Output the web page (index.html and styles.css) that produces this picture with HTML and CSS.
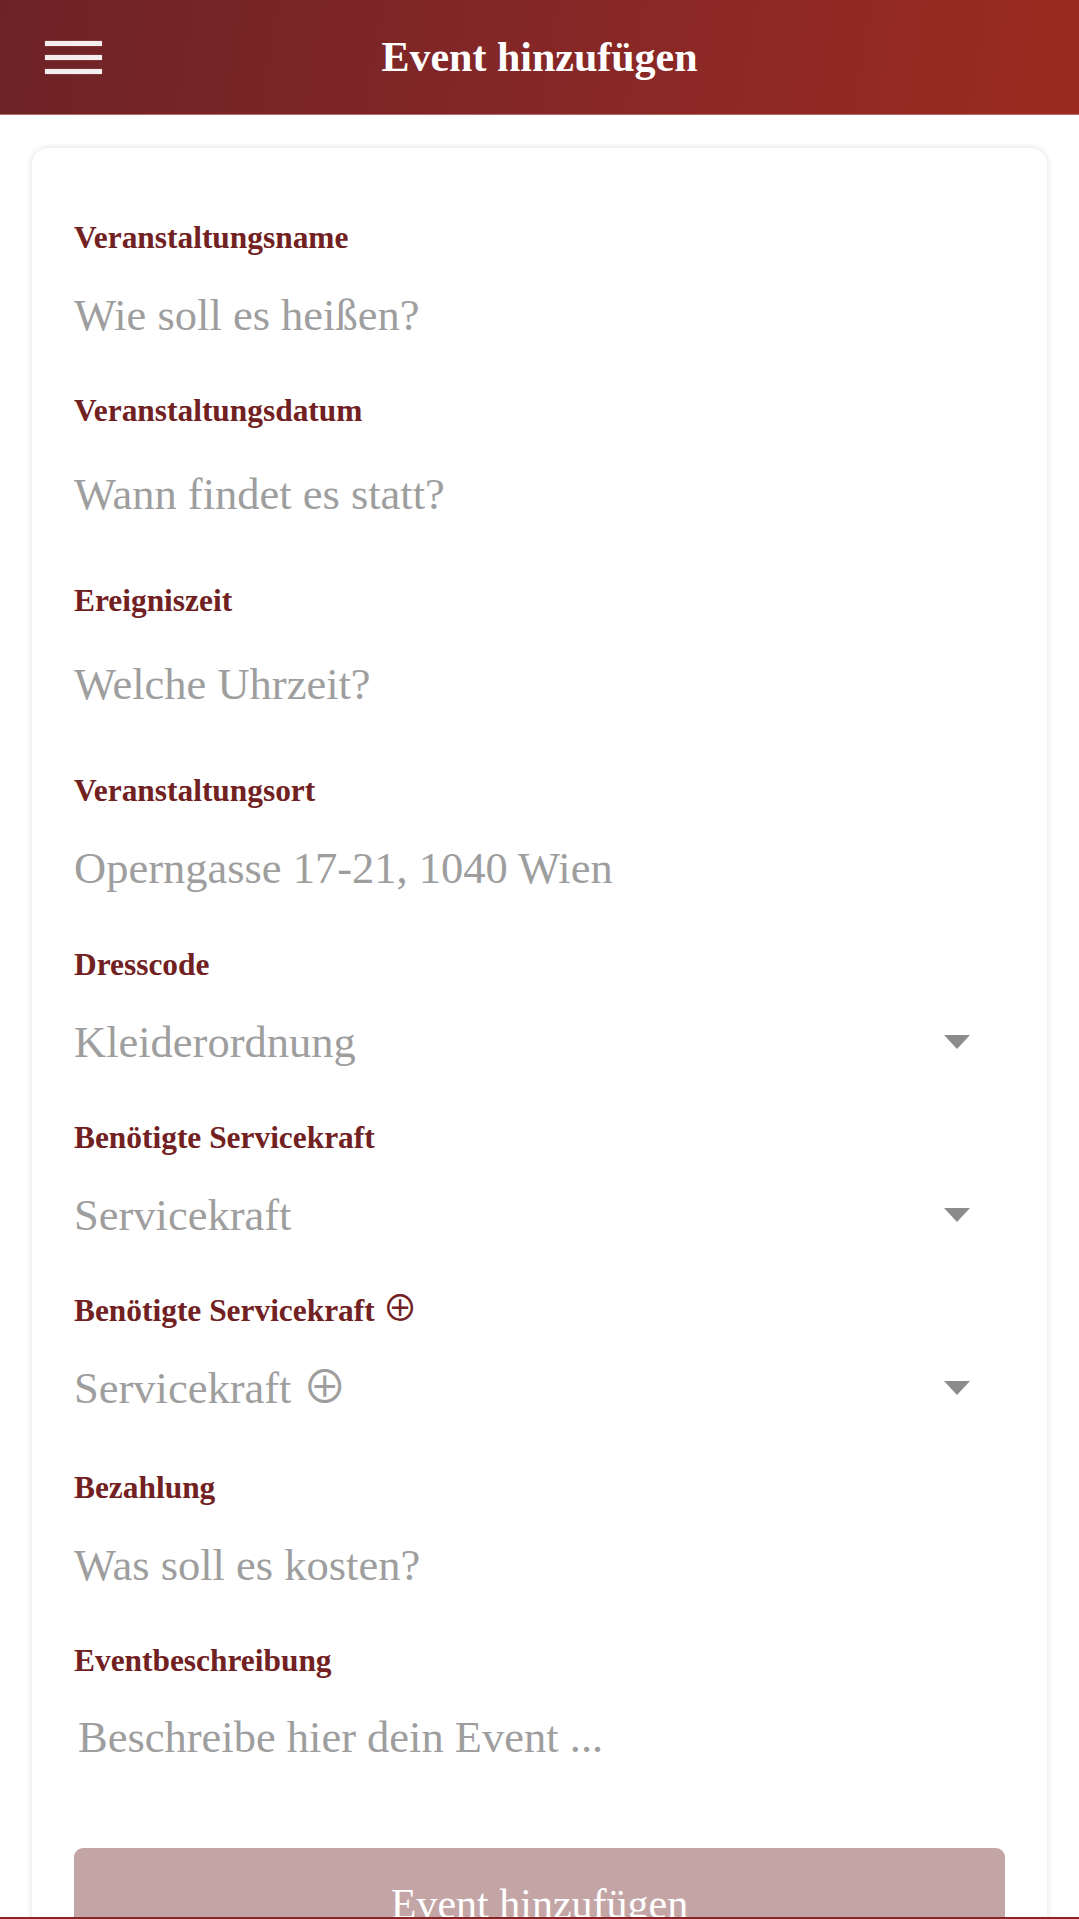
FILE: index.html
```html
<!DOCTYPE html>
<html lang="de">
<head>
<meta charset="utf-8">
<title>Event hinzufügen</title>
<link rel="stylesheet" href="styles.css">
</head>
<body>
<header class="topbar">
  <div class="menu-cell">
    <button class="burger" aria-label="Menü">
      <span></span><span></span><span></span>
    </button>
  </div>
  <h1 class="title">Event hinzufügen</h1>
  <div class="spacer"></div>
</header>

<main class="card">
  <form class="form">
    <div class="field">
      <label class="label" for="name">Veranstaltungsname</label>
      <input class="input" id="name" type="text" placeholder="Wie soll es heißen?">
    </div>
    <div class="field">
      <label class="label" for="date">Veranstaltungsdatum</label>
      <input class="input input-date" id="date" type="text" placeholder="Wann findet es statt?">
    </div>
    <div class="field">
      <label class="label" for="time">Ereigniszeit</label>
      <input class="input input-time" id="time" type="text" placeholder="Welche Uhrzeit?">
    </div>
    <div class="field">
      <label class="label" for="place">Veranstaltungsort</label>
      <input class="input" id="place" type="text" placeholder="Operngasse 17-21, 1040 Wien">
    </div>
    <div class="field">
      <label class="label" for="dress">Dresscode</label>
      <div class="select-wrap">
        <select class="select" id="dress">
          <option selected>Kleiderordnung</option>
        </select>
        <svg class="caret" width="26" height="14" viewBox="0 0 26 14"><path d="M0 0H26L13 14Z" fill="#8c8c8c"/></svg>
      </div>
    </div>
    <div class="field">
      <label class="label" for="staff1">Benötigte Servicekraft</label>
      <div class="select-wrap">
        <select class="select" id="staff1">
          <option selected>Servicekraft</option>
        </select>
        <svg class="caret" width="26" height="14" viewBox="0 0 26 14"><path d="M0 0H26L13 14Z" fill="#8c8c8c"/></svg>
      </div>
    </div>
    <div class="field field-wide">
      <label class="label" for="staff2">Benötigte Servicekraft <span class="sym">⊕</span></label>
      <div class="select-wrap">
        <select class="select" id="staff2">
          <option selected>Servicekraft ⊕</option>
        </select>
        <svg class="caret" width="26" height="14" viewBox="0 0 26 14"><path d="M0 0H26L13 14Z" fill="#8c8c8c"/></svg>
      </div>
    </div>
    <div class="field">
      <label class="label" for="pay">Bezahlung</label>
      <input class="input" id="pay" type="text" placeholder="Was soll es kosten?">
    </div>
    <div class="field field-text">
      <label class="label" for="desc">Eventbeschreibung</label>
      <textarea class="textarea" id="desc" placeholder="Beschreibe hier dein Event ..."></textarea>
    </div>
    <button class="submit" type="button">Event hinzufügen</button>
  </form>
</main>

<div class="bottom-edge"></div>
</body>
</html>
```

FILE: styles.css
```css
html, body {
  margin: 0;
  padding: 0;
  background: #ffffff;
}

body {
  font-family: "Liberation Serif", "Noto Sans CJK JP", "DejaVu Serif", serif;
  overflow: hidden;
}

.topbar {
  display: grid;
  grid-template-columns: 1fr auto 1fr;
  align-items: center;
  height: 115px;
  background: linear-gradient(100deg, #6d2326 0%, #852727 50%, #9b2b20 100%);
  border-bottom: 1px solid #b86a6a;
  box-sizing: border-box;
}

.menu-cell {
  display: flex;
  align-items: center;
  padding-left: 45px;
}

.burger {
  display: flex;
  flex-direction: column;
  gap: 9px;
  padding: 0;
  margin: 0;
  border: none;
  background: transparent;
}

.burger span {
  display: block;
  width: 57px;
  height: 5px;
  background: #f4eeee;
  box-shadow: 0 0 1px rgba(255, 200, 200, 0.6);
}

.title {
  margin: 0;
  font-size: 42px;
  font-weight: bold;
  line-height: 115px;
  color: #ffffff;
  white-space: nowrap;
}

.card {
  margin: 33px 32px 0;
  padding: 72px 42px 0;
  background: #ffffff;
  border-radius: 16px;
  box-shadow: 0 0 6px rgba(0, 0, 0, 0.13);
  min-height: 1900px;
}

.form {
  display: flex;
  flex-direction: column;
}

.field {
  display: flex;
  flex-direction: column;
  margin-bottom: 44.3px;
}

.field-wide {
  margin-bottom: 47.5px;
}

.field-text {
  margin-bottom: 44px;
}

.label {
  display: block;
  height: 36px;
  font-size: 31.4px;
  font-weight: bold;
  line-height: 36px;
  color: #722122;
  margin-bottom: 25px;
  overflow: visible;
}

.sym {
  font-family: "Noto Sans CJK JP", "DejaVu Sans", sans-serif;
  font-weight: normal;
  font-size: 1.12em;
  line-height: 0;
}

.input,
.select,
.textarea {
  font-family: "Liberation Serif", "Noto Sans CJK JP", "DejaVu Serif", serif;
  font-size: 44.5px;
  color: #9e9e9e;
  border: none;
  outline: none;
  background: transparent;
  padding: 0;
  margin: 0;
  box-sizing: border-box;
  width: 100%;
}

.input {
  height: 68px;
}

.input-date {
  height: 84px;
  padding-bottom: 5px;
}

.input-time {
  height: 85.5px;
  padding-bottom: 4px;
}

.input::placeholder,
.textarea::placeholder {
  color: #9e9e9e;
  opacity: 1;
}

.select-wrap {
  display: flex;
  align-items: center;
  height: 68px;
}

.select {
  flex: 1;
  height: 68px;
  appearance: none;
  -webkit-appearance: none;
  border-radius: 0;
}

.caret {
  flex: none;
  margin-right: 35px;
  margin-left: 10px;
}

.textarea {
  height: 100px;
  padding: 7px 0 0 4px;
  resize: none;
  line-height: normal;
  display: block;
}

.submit {
  display: block;
  width: 100%;
  padding: 32px 0;
  border: none;
  border-radius: 9px;
  background: #c4a5a6;
  color: #ffffff;
  font-family: "Liberation Serif", "DejaVu Serif", serif;
  font-size: 42px;
  line-height: normal;
}

.bottom-edge {
  position: fixed;
  left: 0;
  right: 0;
  bottom: 0;
  height: 2px;
  background: #8a2424;
}
```
